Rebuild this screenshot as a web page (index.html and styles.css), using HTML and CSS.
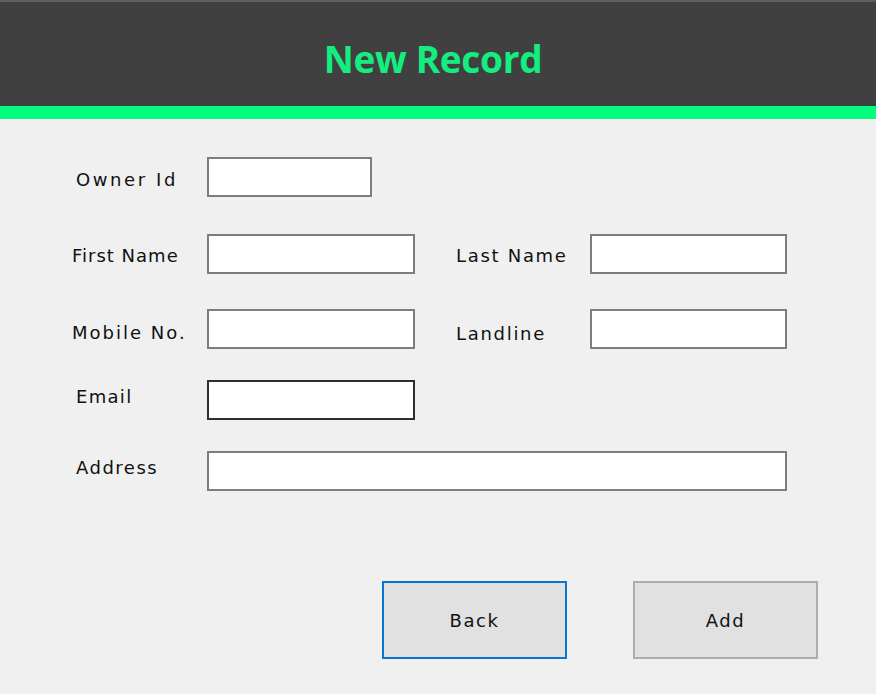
FILE: index.html
```html
<!DOCTYPE html>
<html>
<head>
<meta charset="utf-8">
<link rel="stylesheet" href="styles.css">
</head>
<body>
<header class="header">
  <h1 class="title">New Record</h1>
</header>
<div class="accent"></div>
<main class="form">
  <div class="row row-owner">
    <span class="label lbl-owner">Owner Id</span>
    <div class="field w-owner"></div>
  </div>
  <div class="row row-name">
    <span class="label lbl-first">First Name</span>
    <div class="field w-mid"></div>
    <span class="label label-right lbl-last">Last Name</span>
    <div class="field w-right"></div>
  </div>
  <div class="row row-mobile">
    <span class="label lbl-mobile">Mobile No.</span>
    <div class="field w-mid"></div>
    <span class="label label-right lbl-land">Landline</span>
    <div class="field w-right"></div>
  </div>
  <div class="row row-email">
    <span class="label lbl-email">Email</span>
    <div class="field field-focus w-mid"></div>
  </div>
  <div class="row row-address">
    <span class="label lbl-address">Address</span>
    <div class="field w-address"></div>
  </div>
  <div class="actions">
    <button class="btn btn-default">Back</button>
    <button class="btn">Add</button>
  </div>
</main>
</body>
</html>
```
FILE: styles.css
```css
* { box-sizing: border-box; }
html, body {
  margin: 0;
  padding: 0;
  background: #f0f0f0;
  font-family: "DejaVu Sans", "Liberation Sans", sans-serif;
  color: #111;
}
.header {
  height: 106px;
  background: #404040;
  border-top: 2px solid #5e5e5e;
  display: flex;
  justify-content: center;
  align-items: flex-start;
}
.title {
  margin: 0;
  margin-top: 37px;
  margin-right: 10px;
  font-family: "Open Sans", "DejaVu Sans", sans-serif;
  font-weight: 700;
  font-size: 37px;
  line-height: 40px;
  color: #14ee80;
  letter-spacing: -0.3px;
}
.accent {
  height: 14px;
  background: #00ff7f;
  border-bottom: 1px solid #f6f6f6;
}
.form {
  padding: 37px 0 0 72px;
}
.row {
  display: flex;
  align-items: flex-start;
  height: 40px;
}
.row-name { margin-top: 37px; }
.row-mobile { margin-top: 35px; }
.row-email { margin-top: 31px; }
.row-address { margin-top: 31px; }

.label {
  width: 135px;
  font-size: 18px;
  line-height: 20px;
  letter-spacing: 1px;
  white-space: nowrap;
}
.label-right {
  margin-left: 41px;
  width: 134px;
}
.lbl-owner { padding-left: 4px; margin-top: 13px; letter-spacing: 2.6px; }
.lbl-first { margin-top: 12px; letter-spacing: 1px; }
.lbl-last { margin-top: 12px; letter-spacing: 1.7px; }
.lbl-mobile { margin-top: 14px; letter-spacing: 2px; }
.lbl-land { margin-top: 15px; letter-spacing: 1.7px; }
.lbl-email { padding-left: 4px; margin-top: 7px; letter-spacing: 1.3px; }
.lbl-address { padding-left: 4px; margin-top: 7px; letter-spacing: 1.5px; }

.field {
  height: 40px;
  background: #fff;
  border: 2px solid #7d7d7d;
}
.field-focus { border-color: #2e2e2e; }
.w-owner { width: 165px; }
.w-mid { width: 208px; }
.w-right { width: 197px; }
.w-address { width: 580px; }

.actions {
  display: flex;
  gap: 66px;
  margin-top: 90px;
  padding-left: 310px;
}
.btn {
  width: 185px;
  height: 78px;
  background: #e1e1e1;
  border: 2px solid #adadad;
  font-family: "DejaVu Sans", "Liberation Sans", sans-serif;
  font-size: 18px;
  letter-spacing: 1.6px;
  color: #111;
  padding: 0;
}
.btn-default { border-color: #0a74d4; }
```
